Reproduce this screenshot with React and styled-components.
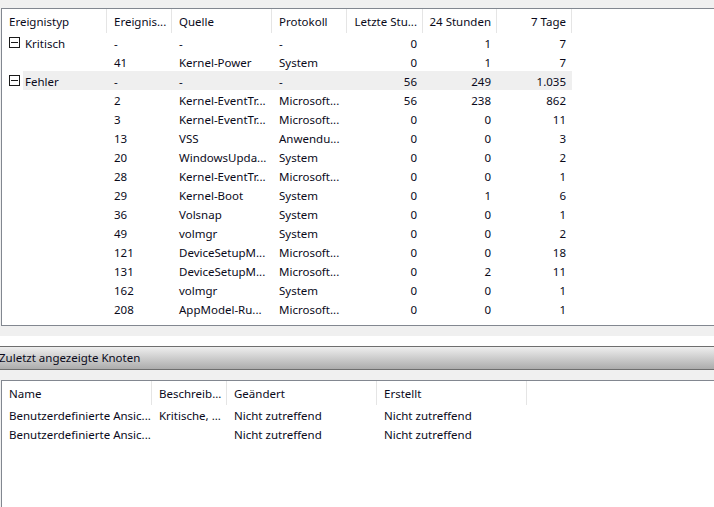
import React from "react";
import styled, { createGlobalStyle } from "styled-components";

const GlobalStyle = createGlobalStyle`
  html, body { margin: 0; padding: 0; }
  body {
    background: #f0f0f0;
    font-family: "Noto Sans", "Open Sans", Arial, sans-serif;
    font-size: 11.5px;
    color: #000;
    overflow: hidden;
  }
`;

const Page = styled.div`
  width: 714px;
  height: 507px;
  display: flex;
  flex-direction: column;
  overflow: hidden;
`;

const ListPanel = styled.div`
  margin: ${(p) => p.$top}px 0 0 1px;
  border: 1px solid #828790;
  border-right: none;
  ${(p) => (p.$open ? "border-bottom: none;" : "")}
  background: #fff;
  height: ${(p) => p.$height}px;
  flex: ${(p) => (p.$open ? "1 1 auto" : "0 0 auto")};
  overflow: hidden;
`;

const HeaderRow = styled.div`
  display: grid;
  grid-template-columns: ${(p) => p.$cols};
  height: 24px;
`;

const HeaderCell = styled.div`
  display: flex;
  align-items: center;
  justify-content: ${(p) => (p.$right ? "flex-end" : "flex-start")};
  padding: ${(p) => (p.$right ? "0 5px 0 0" : "0 0 0 7px")};
  border-right: 1px solid #e5e5e5;
  white-space: nowrap;
  overflow: hidden;
  color: #0a0a1a;
`;

const Row = styled.div`
  display: flex;
  height: 19px;
`;

const Expander = styled.div`
  width: 21px;
  flex: 0 0 21px;
  display: flex;
  align-items: center;
  padding-left: 7px;
  box-sizing: border-box;
`;

const MinusBox = styled.span`
  width: 11px;
  height: 11px;
  box-sizing: border-box;
  border: 1px solid #1a1a1a;
  position: relative;
  &::after {
    content: "";
    position: absolute;
    left: 1px;
    right: 1px;
    top: 4px;
    height: 1px;
    background: #1a1a1a;
  }
`;

const RowBody = styled.div`
  display: grid;
  grid-template-columns: ${(p) => p.$cols};
  background: ${(p) => (p.$selected ? "#efefef" : "transparent")};
  align-items: center;
  padding-top: 1px;
  box-sizing: border-box;
  height: 19px;
`;

const Cell = styled.div`
  white-space: nowrap;
  overflow: hidden;
  color: #0a0a1a;
  text-align: ${(p) => (p.$right ? "right" : "left")};
  padding: ${(p) => (p.$right ? "0 6px 0 0" : `0 0 0 ${p.$pl ?? 7}px`)};
`;

const Splitter = styled.div`
  flex: 0 0 auto;
  height: 20px;
  background: linear-gradient(#f0f0f0 0 10px, #ffffff 10px 20px);
`;

const TitleBar = styled.div`
  flex: 0 0 auto;
  height: 22px;
  box-sizing: content-box;
  border-top: 1px solid #6e6e6e;
  border-bottom: 1px solid #6e6e6e;
  background: linear-gradient(#eeeeee, #acacac);
  display: flex;
  align-items: center;
  padding-bottom: 0;
  white-space: nowrap;
`;

const TitleText = styled.span`
  margin: -2px 0 0 -1px;
  color: #0a0a1a;
`;

const Gap = styled.div`
  flex: 0 0 auto;
  height: 10px;
`;

const topHeaderCols = "105px 65px 100px 75px 76px 74px 75px";
const topBodyCols = "84px 65px 100px 75px 76px 74px 75px";
const bottomCols = "150px 75px 150px 150px";

const topHeaders = [
  { t: "Ereignistyp" },
  { t: "Ereignis..." },
  { t: "Quelle" },
  { t: "Protokoll" },
  { t: "Letzte Stu...", r: true },
  { t: "24 Stunden", r: true },
  { t: "7 Tage", r: true },
];

const rows = [
  { g: "Kritisch", id: "-", src: "-", log: "-", h: "0", d: "1", w: "7" },
  { id: "41", src: "Kernel-Power", log: "System", h: "0", d: "1", w: "7" },
  { g: "Fehler", id: "-", src: "-", log: "-", h: "56", d: "249", w: "1.035", sel: true },
  { id: "2", src: "Kernel-EventTr...", log: "Microsoft...", h: "56", d: "238", w: "862" },
  { id: "3", src: "Kernel-EventTr...", log: "Microsoft...", h: "0", d: "0", w: "11" },
  { id: "13", src: "VSS", log: "Anwendu...", h: "0", d: "0", w: "3" },
  { id: "20", src: "WindowsUpda...", log: "System", h: "0", d: "0", w: "2" },
  { id: "28", src: "Kernel-EventTr...", log: "Microsoft...", h: "0", d: "0", w: "1" },
  { id: "29", src: "Kernel-Boot", log: "System", h: "0", d: "1", w: "6" },
  { id: "36", src: "Volsnap", log: "System", h: "0", d: "0", w: "1" },
  { id: "49", src: "volmgr", log: "System", h: "0", d: "0", w: "2" },
  { id: "121", src: "DeviceSetupM...", log: "Microsoft...", h: "0", d: "0", w: "18" },
  { id: "131", src: "DeviceSetupM...", log: "Microsoft...", h: "0", d: "2", w: "11" },
  { id: "162", src: "volmgr", log: "System", h: "0", d: "0", w: "1" },
  { id: "208", src: "AppModel-Ru...", log: "Microsoft...", h: "0", d: "0", w: "1" },
];

const bottomHeaders = ["Name", "Beschreib...", "Geändert", "Erstellt"];
const bottomRows = [
  ["Benutzerdefinierte Ansic...", "Kritische, ...", "Nicht zutreffend", "Nicht zutreffend"],
  ["Benutzerdefinierte Ansic...", "", "Nicht zutreffend", "Nicht zutreffend"],
];

export default function App() {
  return (
    <Page>
      <GlobalStyle />
      <ListPanel $top={8} $height={316}>
        <HeaderRow $cols={topHeaderCols}>
          {topHeaders.map((h) => (
            <HeaderCell key={h.t} $right={h.r}>
              {h.t}
            </HeaderCell>
          ))}
        </HeaderRow>
        {rows.map((r, i) => (
          <Row key={i}>
            <Expander>{r.g && <MinusBox />}</Expander>
            <RowBody $cols={topBodyCols} $selected={r.sel}>
              <Cell $pl={2}>{r.g || ""}</Cell>
              <Cell>{r.id}</Cell>
              <Cell>{r.src}</Cell>
              <Cell>{r.log}</Cell>
              <Cell $right>{r.h}</Cell>
              <Cell $right>{r.d}</Cell>
              <Cell $right>{r.w}</Cell>
            </RowBody>
          </Row>
        ))}
      </ListPanel>
      <Splitter />
      <TitleBar>
        <TitleText>Zuletzt angezeigte Knoten</TitleText>
      </TitleBar>
      <Gap />
      <ListPanel $top={0} $open>
        <HeaderRow $cols={bottomCols}>
          {bottomHeaders.map((h) => (
            <HeaderCell key={h}>{h}</HeaderCell>
          ))}
        </HeaderRow>
        {bottomRows.map((r, i) => (
          <Row key={i}>
            <RowBody $cols={bottomCols}>
              {r.map((c, j) => (
                <Cell key={j}>{c}</Cell>
              ))}
            </RowBody>
          </Row>
        ))}
      </ListPanel>
    </Page>
  );
}
